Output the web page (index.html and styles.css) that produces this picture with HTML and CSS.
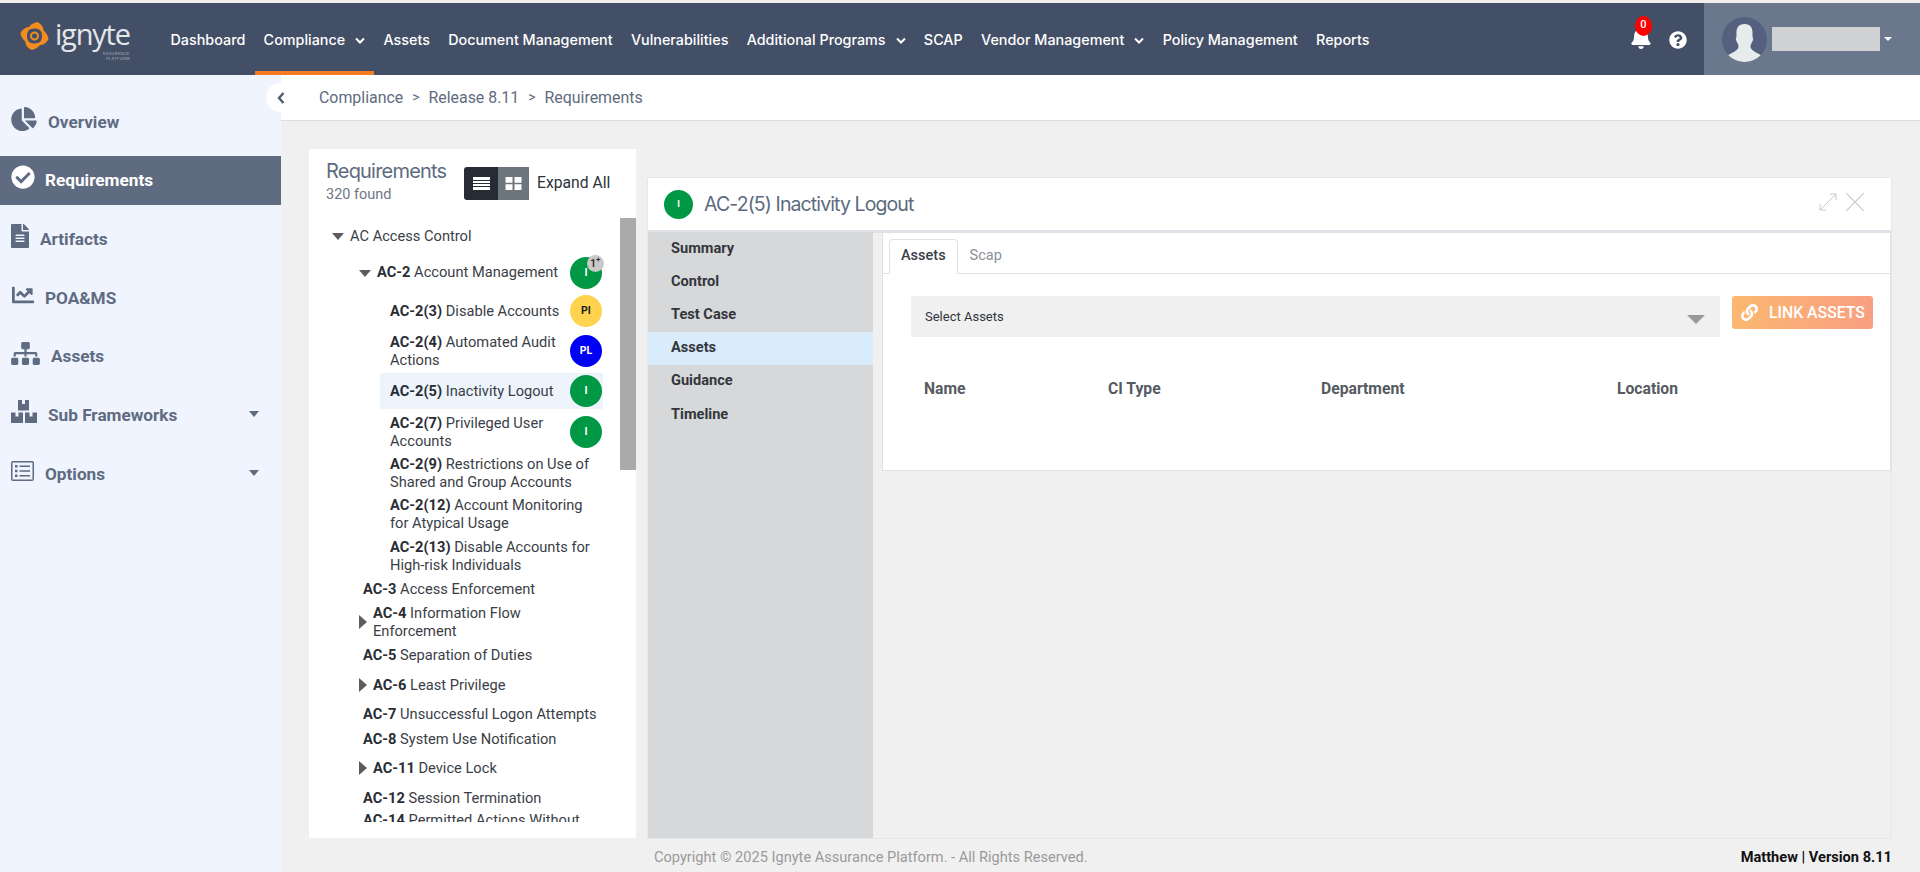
FILE: index.html
```html
<!DOCTYPE html>
<html lang="en">
<head>
<meta charset="utf-8">
<title>Ignyte - Requirements</title>
<link rel="stylesheet" href="styles.css">
</head>
<body>
<div class="topstrip"></div>
<header class="topbar">
  <div class="logo">
    <svg class="logo-mark" viewBox="0 0 30 30">
      <g fill="#f28c1e">
        <path d="M18 .5C23 3 25.500 7.500 24 12.500C22 9 18.500 7 14.500 7.200C12 7.300 10 8 8 9.500C8.500 5 12.500 1.500 18 .5Z"/>
        <path transform="rotate(90 15 15)" d="M18 .5C23 3 25.500 7.500 24 12.500C22 9 18.500 7 14.500 7.200C12 7.300 10 8 8 9.500C8.500 5 12.500 1.500 18 .5Z"/>
        <path transform="rotate(180 15 15)" d="M18 .5C23 3 25.500 7.500 24 12.500C22 9 18.500 7 14.500 7.200C12 7.300 10 8 8 9.500C8.500 5 12.500 1.500 18 .5Z"/>
        <path transform="rotate(270 15 15)" d="M18 .5C23 3 25.500 7.500 24 12.500C22 9 18.500 7 14.500 7.200C12 7.300 10 8 8 9.500C8.500 5 12.500 1.500 18 .5Z"/>
      </g>
      <circle cx="15" cy="15" r="3.600" fill="none" stroke="#f28c1e" stroke-width="2"/>
    </svg>
    <div class="logo-text">
      <span class="logo-name">ignyte</span>
      <span class="logo-sub">ASSURANCE<br>PLATFORM</span>
    </div>
  </div>
  <nav class="nav">
    <a class="nav-item">Dashboard</a>
    <a class="nav-item nav-active">Compliance <svg class="chev" viewBox="0 0 10 7"><path d="M1 1.500L5 5.500L9 1.500" fill="none" stroke="#fff" stroke-width="2"/></svg></a>
    <a class="nav-item">Assets</a>
    <a class="nav-item">Document Management</a>
    <a class="nav-item">Vulnerabilities</a>
    <a class="nav-item">Additional Programs <svg class="chev" viewBox="0 0 10 7"><path d="M1 1.500L5 5.500L9 1.500" fill="none" stroke="#fff" stroke-width="2"/></svg></a>
    <a class="nav-item">SCAP</a>
    <a class="nav-item">Vendor Management <svg class="chev" viewBox="0 0 10 7"><path d="M1 1.500L5 5.500L9 1.500" fill="none" stroke="#fff" stroke-width="2"/></svg></a>
    <a class="nav-item">Policy Management</a>
    <a class="nav-item">Reports</a>
  </nav>
  <div class="top-icons">
    <div class="bell">
      <svg class="bell-icon" viewBox="0 0 448 512"><path fill="#fff" d="M224 512c35.32 0 63.97-28.65 63.97-64H160.03c0 35.35 28.65 64 63.97 64zm215.39-149.71c-19.32-20.76-55.47-51.99-55.47-154.29 0-77.7-54.48-139.9-127.94-155.16V32c0-17.67-14.32-32-31.98-32s-31.98 14.33-31.98 32v20.84C118.56 68.1 64.08 130.3 64.08 208c0 102.3-36.15 133.53-55.47 154.29-6 6.45-8.66 14.16-8.61 21.71.11 16.4 12.98 32 32.1 32h383.8c19.12 0 32-15.6 32.1-32 .05-7.55-2.61-15.26-8.61-21.71z"/></svg>
      <span class="bell-badge">0</span>
    </div>
    <svg class="help-icon" viewBox="0 0 512 512"><path fill="#fff" d="M504 256c0 136.997-111.043 248-248 248S8 392.997 8 256C8 119.083 119.043 8 256 8s248 111.083 248 248zM262.655 90c-54.497 0-89.255 22.957-116.549 63.758-3.536 5.286-2.353 12.415 2.715 16.258l34.699 26.31c5.205 3.947 12.621 3.008 16.665-2.122 17.864-22.658 30.113-35.797 57.303-35.797 20.429 0 45.698 13.148 45.698 32.958 0 14.976-12.363 22.667-32.534 33.976C247.128 238.528 216 254.941 216 296v4c0 6.627 5.373 12 12 12h56c6.627 0 12-5.373 12-12v-1.333c0-28.462 83.186-29.647 83.186-106.667 0-58.002-60.165-102-116.531-102zM256 338c-25.365 0-46 20.635-46 46 0 25.364 20.635 46 46 46s46-20.636 46-46c0-25.365-20.635-46-46-46z"/></svg>
  </div>
  <div class="user">
    <svg class="avatar" viewBox="0 0 45 45">
      <circle cx="22.500" cy="22.500" r="22.500" fill="#55607f"/>
      <clipPath id="avclip"><circle cx="22.500" cy="22.500" r="22.500"/></clipPath>
      <path clip-path="url(#avclip)" fill="#e6ecec" d="M22.500 7C16.500 7 14 11 14.500 17C14.800 21 13.500 21 14 23C14.500 25 16 26 16.500 29C16.800 32 14 34 8 37C6 38 4 40 4 45H41C41 40 39 38 37 37C31 34 28.200 32 28.500 29C29 26 30.500 25 31 23C31.500 21 30.200 21 30.500 17C31 11 28.500 7 22.500 7Z"/>
    </svg>
    <div class="user-name"></div>
    <span class="user-caret"></span>
  </div>
</header>
<div class="layout">
  <aside class="sidebar">
    <a class="side-item"><svg class="si si-over" viewBox="0 0 544 512"><path d="M527.79 288H290.5l158.03 158.03c6.04 6.04 15.98 6.53 22.19 .68 38.7-36.46 65.32-85.61 73.13-140.86 1.34-9.46-6.51-17.85-16.06-17.85zm-15.83-64.8C503.72 103.74 408.26 8.28 288.8 .04 279.68-.59 272 7.1 272 16.24V240h223.77c9.14 0 16.82-7.68 16.19-16.8zM224 288V50.71c0-9.55-8.39-17.4-17.84-16.06C86.99 51.49-4.1 155.6 .14 280.37 4.5 408.51 114.83 513.59 243.03 511.98c50.4-.63 96.97-16.87 135.26-44.03 7.9-5.6 8.42-17.23 1.57-24.08L224 288z"/></svg><span>Overview</span></a>
    <a class="side-item side-active"><svg class="si si-req" viewBox="0 0 512 512"><path d="M504 256c0 136.967-111.033 248-248 248S8 392.967 8 256 119.033 8 256 8s248 111.033 248 248zM227.314 387.314l184-184c6.248-6.248 6.248-16.379 0-22.627l-22.627-22.627c-6.248-6.249-16.379-6.249-22.628 0L216 308.118l-70.059-70.059c-6.248-6.248-16.379-6.248-22.628 0l-22.627 22.627c-6.248 6.248-6.248 16.379 0 22.627l104 104c6.249 6.249 16.379 6.249 22.628.001z"/></svg><span>Requirements</span></a>
    <a class="side-item"><svg class="si si-art" viewBox="0 0 384 512"><path d="M224 136V0H24C10.7 0 0 10.7 0 24v464c0 13.3 10.7 24 24 24h336c13.3 0 24-10.7 24-24V160H248c-13.2 0-24-10.8-24-24zm64 236c0 6.6-5.4 12-12 12H108c-6.6 0-12-5.4-12-12v-8c0-6.6 5.4-12 12-12h168c6.6 0 12 5.4 12 12v8zm0-64c0 6.6-5.4 12-12 12H108c-6.6 0-12-5.4-12-12v-8c0-6.6 5.4-12 12-12h168c6.6 0 12 5.4 12 12v8zm0-72v8c0 6.6-5.4 12-12 12H108c-6.6 0-12-5.4-12-12v-8c0-6.6 5.4-12 12-12h168c6.6 0 12 5.4 12 12zm96-114.1v6.1H256V0h6.1c6.4 0 12.5 2.5 17 7l97.9 98c4.5 4.5 7 10.600 7 16.900z"/></svg><span>Artifacts</span></a>
    <a class="side-item"><svg class="si si-poa" viewBox="0 0 512 512"><path d="M496 384H64V80c0-8.84-7.16-16-16-16H16C7.16 64 0 71.16 0 80v336c0 17.67 14.33 32 32 32h464c8.84 0 16-7.16 16-16v-32c0-8.84-7.16-16-16-16zM464 96H345.94c-21.38 0-32.09 25.85-16.97 40.97l32.4 32.4L288 242.75l-73.37-73.37c-12.5-12.5-32.76-12.5-45.25 0l-68.69 68.69c-6.25 6.25-6.25 16.38 0 22.63l22.62 22.62c6.25 6.25 16.38 6.25 22.63 0L192 237.25l73.37 73.37c12.5 12.5 32.76 12.5 45.25 0l96-96 32.4 32.4c15.12 15.12 40.97 4.41 40.97-16.97V112c.01-8.84-7.15-16-15.99-16z"/></svg><span>POA&amp;MS</span></a>
    <a class="side-item"><svg class="si si-ast" viewBox="0 0 640 512"><path d="M128 352H32c-17.67 0-32 14.33-32 32v96c0 17.67 14.33 32 32 32h96c17.67 0 32-14.33 32-32v-96c0-17.67-14.33-32-32-32zm-24-80h192v48h48v-48h192v48h48v-57.59c0-21.17-17.23-38.41-38.41-38.41H344v-64h40c17.67 0 32-14.33 32-32V32c0-17.67-14.33-32-32-32H256c-17.67 0-32 14.33-32 32v96c0 17.67 14.33 32 32 32h40v64H94.41C73.23 224 56 241.23 56 262.41V320h48v-48zm264 80h-96c-17.67 0-32 14.33-32 32v96c0 17.67 14.33 32 32 32h96c17.67 0 32-14.33 32-32v-96c0-17.67-14.33-32-32-32zm240 0h-96c-17.67 0-32 14.33-32 32v96c0 17.67 14.33 32 32 32h96c17.67 0 32-14.33 32-32v-96c0-17.67-14.33-32-32-32z"/></svg><span>Assets</span></a>
    <a class="side-item"><svg class="si si-sub" viewBox="0 0 26 23"><path d="M7 0H18V10.500H7V0ZM11 0V4H14V0H11ZM0 12.500H12V23H0V12.500ZM4.500 12.500V16.500H7.500V12.500H4.500ZM14 12.500H26V23H14V12.500ZM18.500 12.500V16.500H21.500V12.500H18.500Z" fill-rule="evenodd"/></svg><span>Sub Frameworks</span><i class="side-caret"></i></a>
    <a class="side-item"><svg class="si si-opt" viewBox="0 0 23 20"><path fill-rule="evenodd" d="M2 0H21A2 2 0 0 1 23 2V18A2 2 0 0 1 21 20H2A2 2 0 0 1 0 18V2A2 2 0 0 1 2 0ZM1.500 2V18A.500 .500 0 0 0 2 18.500H21A.500 .500 0 0 0 21.500 18V2A.500 .500 0 0 0 21 1.500H2A.500 .500 0 0 0 1.500 2ZM4 4H6.500V6.500H4ZM4 8.800H6.500V11.300H4ZM4 13.500H6.500V16H4ZM8.500 4.500H19V6H8.500ZM8.500 9.300H19V10.800H8.500ZM8.500 14H19V15.500H8.500Z"/></svg><span>Options</span><i class="side-caret"></i></a>
  </aside>
  <main class="main">
    <div class="crumbs">
      <button class="collapse"><svg viewBox="0 0 10 14"><path d="M7.500 2L3 7L7.500 12" fill="none" stroke="#4c5a72" stroke-width="2.400"/></svg></button>
      <span>Compliance</span><span class="sep">&gt;</span><span>Release 8.11</span><span class="sep">&gt;</span><span>Requirements</span>
    </div>
    <div class="content">
      <section class="req">
        <div class="req-head">
          <div class="req-title"><h2>Requirements</h2><p>320 found</p></div>
          <div class="toggle">
            <span class="tg tg-on"><svg viewBox="0 0 17 13"><path fill="#fff" d="M0 0H17V3H0ZM0 4H17V6H0ZM0 7H17V9H0ZM0 10H17V13H0Z"/></svg></span>
            <span class="tg tg-off"><svg viewBox="0 0 16 13"><path fill="#fff" d="M0 0H7V5.800H0ZM9 0H16V5.800H9ZM0 7.200H7V13H0ZM9 7.200H16V13H9Z"/></svg></span>
          </div>
          <span class="expand">Expand All</span>
        </div>
        <div class="tree-wrap">
          <div class="tree">
            <div class="row"><i class="c-down"></i><span class="t">AC Access Control</span></div>
            <div class="row l1 mt7"><i class="c-down"></i><span class="t"><b>AC-2</b> Account Management</span><span class="badge green"><em class="count">1<sup>+</sup></em><span class="b-i">I</span></span></div>
            <div class="row l2 mt1"><span class="t"><b>AC-2(3)</b> Disable Accounts</span><span class="badge yellow">PI</span></div>
            <div class="row l2 mt1"><span class="t"><b>AC-2(4)</b> Automated Audit Actions</span><span class="badge blue">PL</span></div>
            <div class="row l2 sel"><span class="t"><b>AC-2(5)</b> Inactivity Logout</span><span class="badge green">I</span></div>
            <div class="row l2"><span class="t"><b>AC-2(7)</b> Privileged User Accounts</span><span class="badge green">I</span></div>
            <div class="row l2"><span class="t"><b>AC-2(9)</b> Restrictions on Use of Shared and Group Accounts</span></div>
            <div class="row l2"><span class="t"><b>AC-2(12)</b> Account Monitoring for Atypical Usage</span></div>
            <div class="row l2 mt1"><span class="t"><b>AC-2(13)</b> Disable Accounts for High-risk Individuals</span></div>
            <div class="row l1t mt1"><span class="t"><b>AC-3</b> Access Enforcement</span></div>
            <div class="row l1c mt1"><i class="c-right"></i><span class="t"><b>AC-4</b> Information Flow Enforcement</span></div>
            <div class="row l1t mt1"><span class="t"><b>AC-5</b> Separation of Duties</span></div>
            <div class="row l1c mt7"><i class="c-right"></i><span class="t"><b>AC-6</b> Least Privilege</span></div>
            <div class="row l1t mt6"><span class="t"><b>AC-7</b> Unsuccessful Logon Attempts</span></div>
            <div class="row l1t mt2"><span class="t"><b>AC-8</b> System Use Notification</span></div>
            <div class="row l1c mt6"><i class="c-right"></i><span class="t"><b>AC-11</b> Device Lock</span></div>
            <div class="row l1t mt7"><span class="t"><b>AC-12</b> Session Termination</span></div>
            <div class="row l1t mtn"><span class="t"><b>AC-14</b> Permitted Actions Without Identification or Authentication</span></div>
          </div>
          <div class="track"><div class="thumb"></div></div>
        </div>
      </section>
      <section class="detail">
        <div class="detail-head">
          <span class="badge green badge-lg">I</span>
          <h1>AC-2(5) Inactivity Logout</h1>
          <svg class="d-ico" viewBox="0 0 18 18"><path fill="none" stroke="#c6c9cc" stroke-width="1" d="M1 17L17 1M11 1H17V7M1 11V17H7"/></svg>
          <svg class="d-ico d-x" viewBox="0 0 18 18"><path fill="none" stroke="#c6c9cc" stroke-width="1.200" d="M0 0L18 18M18 0L0 18"/></svg>
        </div>
        <div class="detail-body">
          <ul class="menu">
            <li>Summary</li>
            <li>Control</li>
            <li>Test Case</li>
            <li class="menu-on">Assets</li>
            <li>Guidance</li>
            <li>Timeline</li>
          </ul>
          <div class="pane">
            <div class="card">
              <div class="tabs"><span class="tab tab-on">Assets</span><span class="tab">Scap</span></div>
              <div class="assets-bar">
                <div class="select"><span>Select Assets</span><i class="sel-caret"></i></div>
                <button class="link-btn">
                  <svg viewBox="0 0 512 512"><path fill="#fff" d="M326.612 185.391c59.747 59.809 58.927 155.698.36 214.59-.11.12-.24.25-.36.37l-67.2 67.2c-59.27 59.27-155.699 59.262-214.96 0-59.27-59.26-59.27-155.7 0-214.96l37.106-37.106c9.84-9.84 26.786-3.3 27.294 10.606.648 17.722 3.826 35.527 9.69 52.721 1.986 5.822.567 12.262-3.783 16.612l-13.087 13.087c-28.026 28.026-28.905 73.66-1.155 101.96 28.024 28.579 74.086 28.749 102.325.51l67.2-67.19c28.191-28.191 28.073-73.757 0-101.83-3.701-3.694-7.429-6.564-10.341-8.569a16.037 16.037 0 0 1-6.947-12.606c-.396-10.567 3.348-21.456 11.698-29.806l21.054-21.055c5.521-5.521 14.182-6.199 20.584-1.731a152.482 152.482 0 0 1 20.522 17.197zM467.547 44.449c-59.261-59.262-155.69-59.27-214.96 0l-67.2 67.2c-.12.12-.25.25-.36.37-58.566 58.892-59.387 154.781.36 214.59a152.454 152.454 0 0 0 20.521 17.196c6.402 4.468 15.064 3.789 20.584-1.731l21.054-21.055c8.35-8.35 12.094-19.239 11.698-29.806a16.037 16.037 0 0 0-6.947-12.606c-2.912-2.005-6.64-4.875-10.341-8.569-28.073-28.073-28.191-73.639 0-101.83l67.2-67.19c28.239-28.239 74.3-28.069 102.325.51 27.75 28.3 26.872 73.934-1.155 101.96l-13.087 13.087c-4.35 4.35-5.769 10.79-3.783 16.612 5.864 17.194 9.042 34.999 9.69 52.721.509 13.906 17.454 20.446 27.294 10.606l37.106-37.106c59.271-59.259 59.271-155.699.001-214.959z"/></svg>
                  <span>LINK ASSETS</span>
                </button>
              </div>
              <div class="thead"><span class="th th-name">Name</span><span class="th th-ci">CI Type</span><span class="th th-dep">Department</span><span class="th">Location</span></div>
            </div>
          </div>
        </div>
      </section>
    </div>
    <footer class="foot"><span class="copy">Copyright © 2025 Ignyte Assurance Platform. - All Rights Reserved.</span><span class="ver">Matthew | Version 8.11</span></footer>
  </main>
</div>
</body>
</html>
```
FILE: styles.css
```css
* { box-sizing: border-box; }
html, body { margin: 0; padding: 0; height: 100%; overflow: hidden; }
body { width: 1920px; height: 872px; display: flex; flex-direction: column; font-family: Roboto, "Liberation Sans", sans-serif; font-size: 14.650px; color: #2b2f38; background: #f1f0f1; }
.topstrip { height: 3px; background: #f1eeec; flex: none; }

/* Top bar */
.topbar { height: 72px; flex: none; display: flex; align-items: stretch; background: #434f66; color: #fff; }
.logo { width: 162px; flex: none; display: flex; padding: 18px 0 0 20px; }
.logo-mark { width: 29px; height: 30px; flex: none; }
.logo-text { display: flex; flex-direction: column; margin-left: 6px; color: #e4e6ea; }
.logo-name { font-family: "Open Sans", sans-serif; font-size: 29px; font-weight: 500; line-height: 30px; letter-spacing: -1.200px; margin-top: -2px; }
.logo-sub { font-family: Inter, sans-serif; font-size: 4px; line-height: 5px; letter-spacing: .3px; text-align: right; color: #a9afba; margin-top: 2px; }
.nav { display: flex; align-items: stretch; }
.nav-item { display: flex; align-items: center; gap: 8px; padding: 0 8.500px; margin-right: 1.300px; font-family: Inter, sans-serif; font-size: 14.350px; font-weight: 500; white-space: nowrap; }
.nav-active { box-shadow: inset 0 -4px 0 #f47b20; }
.chev { width: 10px; height: 7px; margin: 3px 0 0 2px; }
.top-icons { margin-left: auto; display: flex; align-items: flex-start; }
.bell { position: relative; width: 22px; margin-top: 24px; }
.bell-icon { display: block; width: 20px; height: 22px; }
.bell-badge { position: absolute; left: 4px; top: -11px; width: 17px; height: 20px; border-radius: 50%; background: #f00; color: #fff; font-size: 11px; font-weight: 500; line-height: 18px; text-align: center; }
.help-icon { width: 18px; height: 18px; margin: 28px 17px 0 16px; }
.user { width: 216px; flex: none; background: #6b778d; display: flex; align-items: center; padding-left: 18px; }
.avatar { width: 45px; height: 45px; flex: none; }
.user-name { width: 108px; height: 24px; margin-left: 5px; background: #d0d1d3; }
.user-caret { margin-left: 4px; border: 4px solid transparent; border-top: 4px solid #fff; border-bottom: 0; }

/* Layout */
.layout { flex: 1; display: flex; min-height: 0; }
.sidebar { width: 281px; flex: none; background: #eff4ff; padding-top: 22px; display: flex; flex-direction: column; gap: 9.600px; }
.side-item { height: 49px; display: flex; align-items: center; padding: 1px 0 0 11px; color: #5f6b80; font-size: 17.200px; font-weight: 700; }
.side-active { background: #5f6b80; color: #fff; padding-top: 0; }
.si { flex: none; fill: #5f6b80; }
.side-active .si { fill: #fff; }
.si-over { width: 26px; height: 24px; margin: -6px 11px 0 0; }
.si-req { width: 24px; height: 24px; margin: -6px 10px 0 0; }
.si-art { width: 18px; height: 24px; margin: -6px 11px 0 0; }
.si-poa { width: 24px; height: 22px; margin: -6px 10px 0 0; }
.si-ast { width: 29px; height: 23px; margin: -6px 11px 0 0; }
.si-sub { width: 26px; height: 23px; margin: -6px 11px 0 0; }
.si-opt { width: 23px; height: 20px; margin: -6px 11px 0 0; }
.side-caret { margin-left: auto; margin-right: 22px; margin-top: -2px; border: 5px solid transparent; border-top: 6px solid #5f6b80; border-bottom: 0; }

/* Main */
.main { flex: 1; min-width: 0; display: flex; flex-direction: column; }
.crumbs { height: 46px; flex: none; background: #fff; border-bottom: 1px solid #dcdcdc; display: flex; align-items: center; padding: 0 0 1px 38px; color: #5f6b7e; font-size: 15.900px; position: relative; }
.sep { margin: 0 9px; font-size: 14px; }
.collapse { position: absolute; left: -15px; top: 8px; width: 29px; height: 29px; border: 0; border-radius: 50%; background: #fff; padding: 0; display: flex; align-items: center; justify-content: center; }
.collapse svg { width: 10px; height: 14px; }
.content { flex: 1; min-height: 0; display: flex; align-items: stretch; gap: 12px; padding: 28px 29px 0 28px; }

/* Requirements list */
.req { width: 327px; flex: none; background: #fff; display: flex; flex-direction: column; }
.req-head { height: 69px; flex: none; display: flex; align-items: flex-start; padding: 10px 0 0 17px; }
.req-title { width: 138px; }
.req-title h2 { margin: 0; font-family: Inter, sans-serif; font-size: 20px; font-weight: 400; line-height: 24px; letter-spacing: -.8px; color: #5d6b80; }
.req-title p { margin: 4px 0 0; font-size: 14.500px; line-height: 16px; color: #6f7683; }
.toggle { display: flex; margin-top: 8px; }
.tg { height: 33px; display: flex; align-items: center; justify-content: center; }
.tg svg { width: 17px; height: 13px; }
.tg-on { width: 34px; background: #272b36; border-radius: 3px 0 0 3px; }
.tg-off { width: 31px; background: #6c757d; }
.expand { margin: 14px 0 0 8px; font-size: 15.700px; line-height: 20px; white-space: nowrap; color: #2f333b; }
.tree-wrap { flex: none; height: 604px; display: flex; overflow: hidden; }
.tree { width: 311px; flex: none; display: flex; flex-direction: column; gap: 5px; padding: 9px 0 0 23px; }
.row { display: flex; align-items: center; flex: none; line-height: 18px; width: 271px; color: #3a3e46; }
.row b { font-weight: 700; color: #2a2d35; }
.t { flex: 1; min-width: 0; }
.l1 { margin-left: 27px; width: 243px; }
.l1 .t { margin-top: -2px; }
.l1t { margin-left: 31px; width: 240px; }
.l1c { margin-left: 27px; width: 244px; }
.l2 { margin-left: 48px; width: 223px; padding: 0 1px 0 10px; min-height: 32px; }
.l2 .t { padding-right: 4px; }
.sel { background: #edf4fb; height: 36px; margin-top: -1px; }
.mt1 { margin-top: 1px; }
.mt2 { margin-top: 2px; }
.mt6 { margin-top: 6px; }
.mt7 { margin-top: 7px; }
.mtn { margin-top: -1px; }
.c-down { flex: none; margin-right: 6px; border: 6.500px solid transparent; border-top: 7.500px solid #5c5c60; border-bottom: 0; }
.c-right { flex: none; margin-right: 6px; border: 7px solid transparent; border-left: 8px solid #5c5c60; border-right: 0; }
.badge { position: relative; flex: none; width: 32px; height: 32px; border-radius: 50%; display: flex; align-items: center; justify-content: center; font-size: 10.500px; font-weight: 700; color: #fff; }
.b-i { position: relative; }
.green { background: #009845; }
.yellow { background: #ffd34e; color: #1c1c1c; }
.blue { background: #0000f5; }
.count { position: absolute; top: -2px; right: -2px; width: 17px; height: 17px; border-radius: 50%; background: #c9c9c9; color: #222; font-size: 11px; font-style: normal; font-weight: 500; line-height: 17px; text-align: left; padding-left: 3px; }
.count sup { font-size: 7px; line-height: 0; }
.track { width: 16px; flex: none; }
.thumb { height: 252px; background: #aaa; }

/* Detail */
.detail { flex: 1; min-width: 0; margin-top: 29px; display: flex; flex-direction: column; border-radius: 3px 3px 0 0; box-shadow: 0 0 0 1px #e6e7e9; }
.detail-head { height: 55px; flex: none; background: #fff; border-bottom: 3px solid #dee2e6; display: flex; align-items: center; padding: 0 27px 0 16px; }
.badge-lg { width: 29px; height: 29px; font-size: 9px; }
.detail-head h1 { margin: 0 0 0 11px; flex: 1; font-family: Inter, sans-serif; font-size: 19.500px; font-weight: 400; letter-spacing: -.9px; color: #5d6b80; white-space: nowrap; }
.d-ico { width: 18px; height: 18px; flex: none; margin-top: -5px; }
.d-x { margin-left: 9px; }
.detail-body { flex: 1; min-height: 0; display: flex; }
.menu { width: 225px; flex: none; margin: -1px 0 0; padding: 0; list-style: none; background: #d6d8da; }
.menu li { height: 33.200px; padding: 0 0 2px 23px; display: flex; align-items: center; font-weight: 700; font-size: 14.600px; color: #33363c; }
.menu-on { background: #d9ecfb; }
.pane { flex: 1; min-width: 0; padding: 0 0 0 9px; }
.card { height: 238px; background: #fff; border: 1px solid #dfe1e4; border-top: 0; }
.tabs { height: 41px; display: flex; align-items: flex-end; padding-left: 6px; border-bottom: 1px solid #dee2e6; }
.tab { height: 35px; padding: 0 11px 2px; display: flex; align-items: center; font-size: 14.500px; color: #8b8f96; margin-bottom: -1px; border: 1px solid transparent; }
.tab-on { font-weight: 500; color: #3a4048; background: #fff; border-color: #dee2e6 #dee2e6 #fff; border-radius: 4px 4px 0 0; }
.assets-bar { display: flex; align-items: flex-start; gap: 12px; padding: 22px 17px 0 28px; }
.select { flex: 1; height: 41px; background: #f1f0f1; display: flex; align-items: center; justify-content: space-between; padding: 0 15px 0 14px; font-size: 13px; color: #30343c; }
.sel-caret { border: 9px solid transparent; border-top: 9px solid #999; border-bottom: 0; margin-top: 5px; }
.link-btn { width: 141px; height: 33px; flex: none; border: 0; border-radius: 3px; background: linear-gradient(90deg, #fbb870, #f99f82); color: #fff; display: flex; align-items: center; padding: 0 0 0 9px; font-family: Roboto, sans-serif; font-size: 15.800px; font-weight: 500; white-space: nowrap; }
.link-btn svg { width: 17px; height: 17px; flex: none; margin-right: 11px; }
.thead { display: flex; padding: 42px 0 0 41px; font-size: 15.700px; font-weight: 700; color: #555b63; line-height: 20px; }
.th-name { width: 184px; }
.th-ci { width: 213px; }
.th-dep { width: 296px; }

/* Footer */
.foot { height: 34px; flex: none; display: flex; justify-content: space-between; align-items: center; padding: 4px 28px 0 373px; font-size: 14.600px; }
.copy { color: #9a9a9a; }
.ver { color: #111; font-weight: 700; }
```
